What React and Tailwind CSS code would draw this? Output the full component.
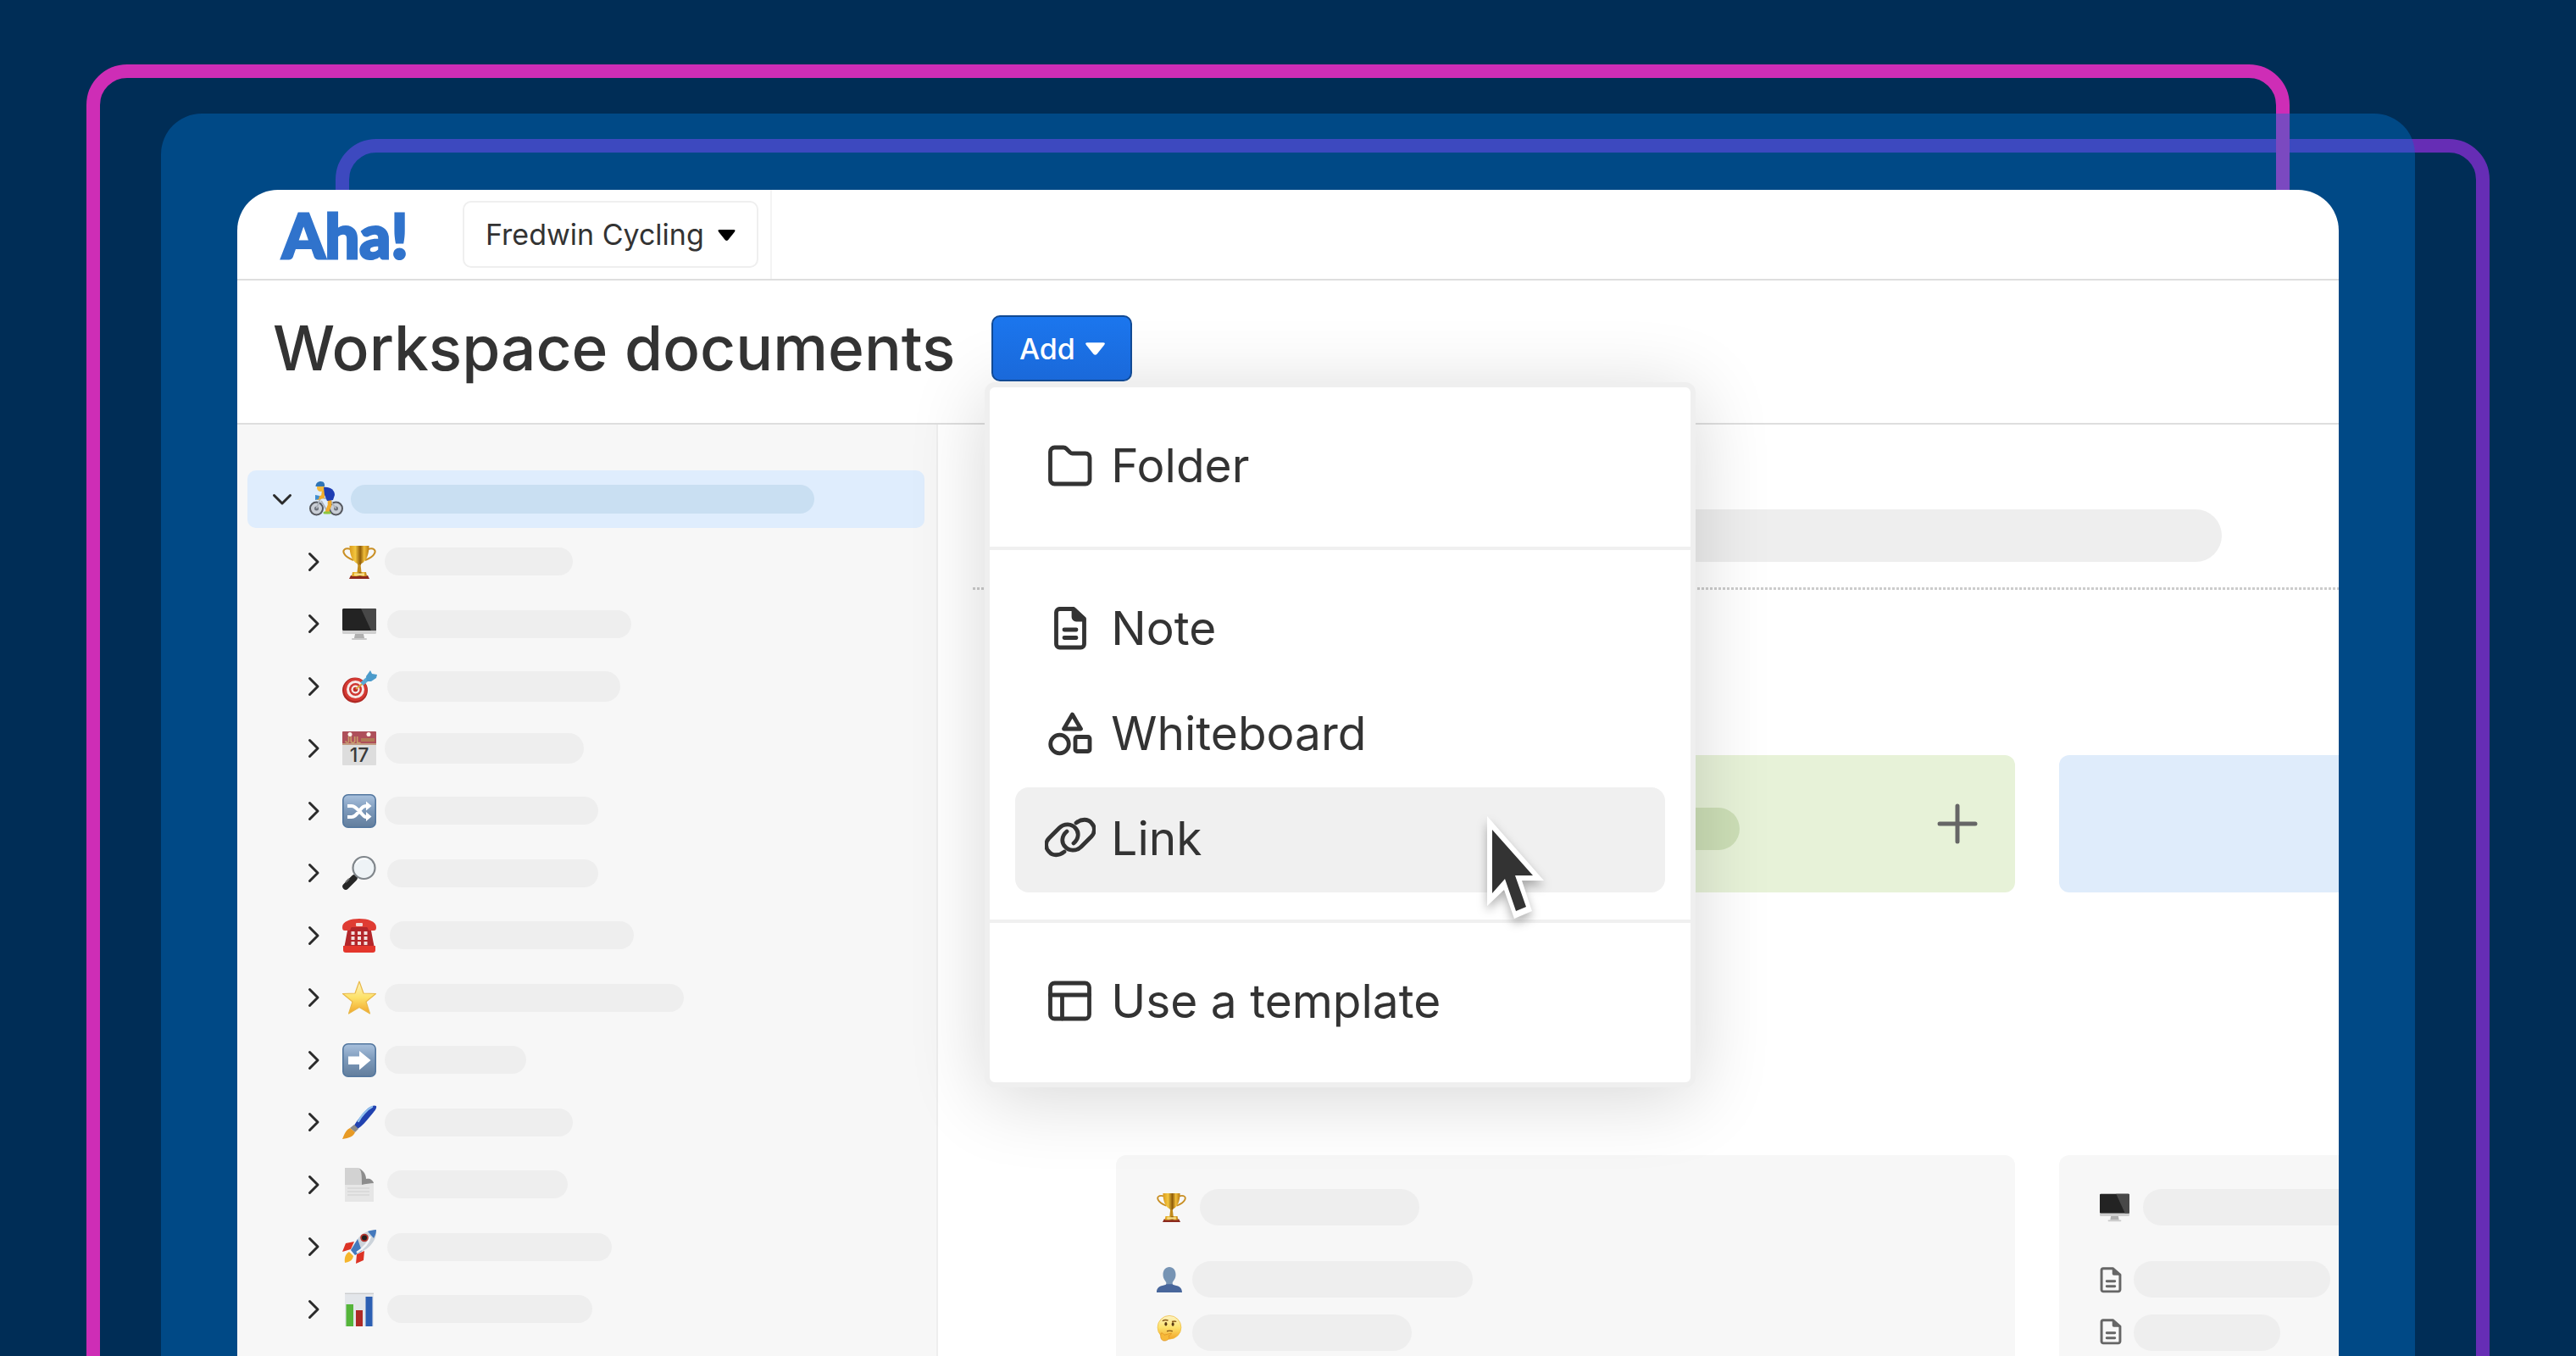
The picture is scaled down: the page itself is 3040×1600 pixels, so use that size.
import { useState } from "react";

//Sidebar tree
const treeItems = [
  { id: 1, name: "Goals", icon: "trophy", bar: "ml-[10px] w-[222px] h-[33px]" },
  { id: 2, name: "Product", icon: "monitor", bar: "ml-[13px] w-[288px] h-[33px]" },
  { id: 3, name: "Strategy", icon: "target", bar: "ml-[13px] w-[275px] h-[36px]" },
  { id: 4, name: "Planning", icon: "calendar", bar: "ml-[10px] w-[235px] h-[36px]" },
  { id: 5, name: "Workflows", icon: "shuffle", bar: "ml-[10px] w-[252px] h-[33px]" },
  { id: 6, name: "Research", icon: "search", bar: "ml-[13px] w-[249px] h-[33px]" },
  { id: 7, name: "Support", icon: "phone", bar: "ml-[16px] w-[288px] h-[33px]" },
  { id: 8, name: "Favorites", icon: "star", bar: "ml-[10px] w-[353px] h-[33px]" },
  { id: 9, name: "Next", icon: "arrow", bar: "ml-[10px] w-[167px] h-[33px]" },
  { id: 10, name: "Design", icon: "brush", bar: "ml-[10px] w-[222px] h-[33px]" },
  { id: 11, name: "Pages", icon: "page", bar: "ml-[13px] w-[213px] h-[33px]" },
  { id: 12, name: "Launches", icon: "rocket", bar: "ml-[13px] w-[265px] h-[33px]" },
  { id: 13, name: "Reports", icon: "chart", bar: "ml-[13px] w-[242px] h-[33px]" },
];

//Add menu, one array per section
const menuSections = [
  [{ label: "Folder", icon: "folder" }],
  [
    { label: "Note", icon: "note" },
    { label: "Whiteboard", icon: "whiteboard" },
    { label: "Link", icon: "link" },
  ],
  [{ label: "Use a template", icon: "template" }],
];

const App = () => {
  const [active, setActive] = useState("Link");

  return (
    <div className="relative flex h-screen flex-col overflow-hidden bg-[#002d56] px-[190px] pt-[134px] font-['Inter',sans-serif] text-[#333333]">
      {/* BACKDROP FRAMES */}
      <div className="absolute top-[164px] right-[102px] -bottom-20 left-[396px] rounded-[48px] border-[16px] border-[#662db5]" />
      <div className="absolute top-[76px] right-[338px] -bottom-20 left-[102px] rounded-[48px] border-[16px] border-[#ce2db6]" />

      <div className="relative flex flex-1 flex-col rounded-t-[48px] bg-[#0073cf]/40 px-[90px] pt-[90px]">
        <div className="flex flex-1 flex-col overflow-hidden rounded-t-[48px] bg-white">
          <TopBar />

          {/* TITLE */}
          <div className="flex h-[170px] shrink-0 items-center border-b-2 border-[#dedede] pb-2 pl-[42px]">
            <h1 className="text-[73px] leading-[90px] font-medium whitespace-nowrap">
              Workspace documents
            </h1>
            <div className="relative z-10 ml-[43px]">
              <button className="relative z-10 flex h-[78px] w-[166px] items-center justify-center gap-3 rounded-[10px] border-2 border-[#124a94] bg-linear-to-b from-[#1b76ee] to-[#1a69da] text-[34px] font-medium text-white">
                Add
                <Caret className="h-[15px] w-[23px]" />
              </button>
              <AddMenu active={active} setActive={setActive} />
            </div>
          </div>

          <div className="flex min-h-0 flex-1">
            <Sidebar />
            <Main />
          </div>
        </div>
      </div>
    </div>
  );
};

const TopBar = () => (
  <header className="flex h-[107px] shrink-0 items-center border-b-2 border-[#dedede] pl-[53px]">
    <a
      href="#"
      className="w-[213px] font-['Lato',sans-serif] text-[72px] leading-[80px] font-black text-[#3073cc] [-webkit-text-stroke:3px_#3073cc]"
    >
      Aha!
    </a>
    <div className="relative">
      <select
        aria-label="Workspace"
        className="h-[79px] w-[349px] appearance-none rounded-[10px] border-2 border-[#efefef] bg-white pl-[25px] text-[34px]"
      >
        <option>Fredwin Cycling</option>
      </select>
      <Caret className="pointer-events-none absolute top-[34px] right-[27px] h-[13px] w-[21px] text-black" />
    </div>
    <div className="ml-[14px] h-full w-[2px] bg-[#f4f4f4]" />
  </header>
);

const AddMenu = ({ active, setActive }) => (
  <div className="absolute top-[79px] -left-[8px] w-[839px] divide-y-4 divide-[#f0f0f0] rounded-[12px] border-[6px] border-[#efefef] bg-white shadow-[0_12px_90px_rgba(0,0,0,0.16)]">
    {menuSections.map((section) => (
      <div key={section[0].label} className="px-[30px] py-8">
        {section.map((item) => (
          <button
            key={item.label}
            onClick={() => setActive(item.label)}
            className={
              item.label === active
                ? "relative flex h-[124px] w-full items-center gap-[18px] rounded-[16px] bg-[#f0f0f0] pb-1 pl-[35px] text-[55px]"
                : "relative flex h-[124px] w-full items-center gap-[18px] rounded-[16px] pb-1 pl-[35px] text-[55px]"
            }
          >
            <MenuIcon name={item.icon} />
            {item.label}
            {item.label === active && <Cursor />}
          </button>
        ))}
      </div>
    ))}
  </div>
);

const Sidebar = () => (
  <aside className="w-[827px] shrink-0 border-r-2 border-[#eeeeee] bg-[#f7f7f7] pt-[54px] pr-[14px] pl-[12px]">
    <div className="flex h-[68px] items-center rounded-[10px] bg-[#dfedfd] pl-[29px]">
      <button aria-label="Collapse workspace">
        <Chevron className="h-6 w-6 rotate-90" />
      </button>
      <Emoji name="cyclist" className="ml-5 h-[40px] w-[40px]" />
      <div className="ml-[9px] h-[34px] w-[547px] rounded-full bg-[#c9dff2]" />
    </div>
    <ul className="mt-[3px] flex h-[955px] flex-col justify-between">
      {treeItems.map((item) => (
        <li key={item.id} className="flex h-[73px] items-center pl-[66px]">
          <button aria-label={`Expand ${item.name}`}>
            <Chevron className="h-6 w-6" />
          </button>
          <Emoji name={item.icon} className="ml-[22px] h-[40px] w-[40px]" />
          <div className={`rounded-full bg-[#eeeeee] ${item.bar}`} />
        </li>
      ))}
    </ul>
  </aside>
);

const Main = () => (
  <main className="min-w-0 flex-1 overflow-hidden pt-[100px] pl-[41px]">
    <div className="ml-[169px] h-[62px] w-[1305px] rounded-full bg-[#eeeeee]" />
    <div className="mt-[30px] h-[3px] bg-[repeating-linear-gradient(90deg,#cccccc_0_3px,transparent_3px_5px)]" />

    {/* CARDS */}
    <div className="mt-[195px] ml-[169px] grid grid-cols-[1061px_1061px] gap-x-[52px]">
      <div className="flex h-[162px] items-center justify-between rounded-[12px] bg-[#e7f2d8] pr-[44px] pl-12">
        <div className="mt-3 h-[50px] w-[688px] rounded-full bg-[#cddfb7]" />
        <button aria-label="Add document">
          <svg viewBox="0 0 48 48" className="h-12 w-12" fill="none">
            <path
              d="M24 3v42M3 24h42"
              stroke="#666666"
              strokeWidth="5"
              strokeLinecap="round"
            />
          </svg>
        </button>
      </div>
      <div className="h-[162px] rounded-[12px] bg-[#dfecfb]" />

      <div className="mt-[310px] h-[400px] rounded-[12px] bg-[#f7f7f7] pt-[40px] pl-12">
        <div className="flex items-center gap-4">
          <Emoji name="trophy" className="h-[35px] w-[35px]" />
          <div className="h-[43px] w-[259px] rounded-full bg-[#eeeeee]" />
        </div>
        <div className="mt-[42px] flex items-center gap-3">
          <Emoji name="person" className="h-[30px] w-[30px]" />
          <div className="h-[43px] w-[331px] rounded-full bg-[#eeeeee]" />
        </div>
        <div className="mt-5 flex items-center gap-3">
          <Emoji name="thinking" className="mb-3 h-[30px] w-[30px]" />
          <div className="h-[43px] w-[259px] rounded-full bg-[#eeeeee]" />
        </div>
      </div>
      <div className="mt-[310px] h-[400px] rounded-[12px] bg-[#f7f7f7] pt-[40px] pl-12">
        <div className="flex items-center gap-4">
          <Emoji name="monitor" className="h-[35px] w-[35px]" />
          <div className="h-[43px] w-[400px] rounded-full bg-[#eeeeee]" />
        </div>
        <div className="mt-[42px] flex items-center gap-[14px]">
          <DocIcon className="h-[32px] w-[26px] text-[#666666]" />
          <div className="h-[43px] w-[232px] rounded-full bg-[#eeeeee]" />
        </div>
        <div className="mt-5 flex items-center gap-[14px]">
          <DocIcon className="mb-1 h-[32px] w-[26px] text-[#666666]" />
          <div className="h-[43px] w-[173px] rounded-full bg-[#eeeeee]" />
        </div>
      </div>
    </div>
  </main>
);

const Caret = ({ className }) => (
  <svg viewBox="0 0 22 14" className={className} fill="currentColor">
    <path d="M2 0h18q3 0 1 3l-8 10q-2 2-4 0l-8-10q-2-3 1-3z" />
  </svg>
);

const Chevron = ({ className }) => (
  <svg viewBox="0 0 24 24" className={className} fill="none">
    <path
      d="M7.500 2.500l9.500 9.500-9.500 9.500"
      stroke="#2b2b2b"
      strokeWidth="3"
      strokeLinecap="round"
      strokeLinejoin="round"
    />
  </svg>
);

const Cursor = () => (
  <svg
    viewBox="0 0 68 121"
    className="absolute top-[34px] left-[557px] h-[121px] w-[68px] overflow-visible drop-shadow-[0_6px_6px_rgba(0,0,0,0.3)]"
  >
    <path d="M0 0l67 76H41l12 36-21 9-12-34L0 106z" fill="#ffffff" />
    <path d="M6 16l48 54H33l13 37-12 5-13-38L6 91z" fill="#333333" />
  </svg>
);

const DocIcon = ({ className }) => (
  <svg viewBox="8 3 44 54" className={className} fill="none">
    <path
      d="M17 7.500h17L48.500 20v30a3.500 3.500 0 0 1-3.500 3.500H15a3.500 3.500 0 0 1-3.500-3.500V11a3.500 3.500 0 0 1 3.500-3.500z"
      stroke="currentColor"
      strokeWidth="5"
      strokeLinejoin="round"
    />
    <path d="M33 7v11a3 3 0 0 0 3 3h13z" fill="currentColor" />
    <path
      d="M22 33h16M22 43h16"
      stroke="currentColor"
      strokeWidth="5"
      strokeLinecap="round"
    />
  </svg>
);

const MenuIcon = ({ name }) => (
  <svg
    viewBox="0 0 60 60"
    className="h-[60px] w-[60px]"
    fill="none"
    stroke="#333333"
    strokeWidth="4.800"
    strokeLinejoin="round"
    strokeLinecap="round"
  >
    {name === "folder" && (
      <path d="M6.500 14a5 5 0 0 1 5-5H22a5 5 0 0 1 3.500 1.500l4.500 4.500a4 4 0 0 0 3 1h15a5 5 0 0 1 5 5v26a5 5 0 0 1-5 5H11.500a5 5 0 0 1-5-5z" />
    )}
    {name === "note" && (
      <>
        <path d="M17 7.500h17L46.500 19v30a4 4 0 0 1-4 4h-25a4 4 0 0 1-4-4V11.500a4 4 0 0 1 4-4z" />
        <path d="M34 8v9a3 3 0 0 0 3 3h9z" fill="#333333" />
        <path d="M23 32h14M23 41.500h14" />
      </>
    )}
    {name === "whiteboard" && (
      <>
        <path d="M32.500 8L42.500 25h-20z" />
        <circle cx="17.500" cy="43" r="10.800" />
        <rect x="36" y="34.500" width="17" height="17" rx="2" />
      </>
    )}
    {name === "link" && (
      <>
        <path d="M23 46C17 51 9 51 5 46C0 41 1 34 5 30L17 18C23 12 32 13 36 18C41 23 40 31 34 36" />
        <path d="M37 12C43 7 51 7 55 12C60 17 59 24 55 28L43 40C37 46 28 45 24 40C19 35 20 27 26 22" />
      </>
    )}
    {name === "template" && (
      <>
        <rect x="6.500" y="9" width="46" height="42" rx="5" />
        <path d="M6.500 23h46M20.500 23v28" />
      </>
    )}
  </svg>
);

//Full colour row icons
const Emoji = ({ name, className }) => (
  <svg viewBox="0 0 40 40" className={`overflow-visible ${className}`} fill="none">
    <defs>
      <linearGradient id={`gold-${name}`} x1="0" x2="1" y1="0" y2="0">
        <stop offset="0" stopColor="#d99a1c" />
        <stop offset="0.300" stopColor="#f3c63f" />
        <stop offset="0.550" stopColor="#8f5c0a" />
        <stop offset="0.750" stopColor="#f0bd3a" />
        <stop offset="1" stopColor="#b67a12" />
      </linearGradient>
      <linearGradient id={`steel-${name}`} x1="0" x2="0" y1="0" y2="1">
        <stop offset="0" stopColor="#a9c1dd" />
        <stop offset="0.500" stopColor="#7b98b9" />
        <stop offset="1" stopColor="#627d9c" />
      </linearGradient>
      <linearGradient id={`sun-${name}`} x1="0" x2="0" y1="0" y2="1">
        <stop offset="0" stopColor="#fdf3c4" />
        <stop offset="0.500" stopColor="#fde26a" />
        <stop offset="1" stopColor="#f2a52a" />
      </linearGradient>
    </defs>

    {name === "cyclist" && (
      <>
        <g stroke="#55585f" strokeWidth="2">
          <circle cx="8.500" cy="31" r="7.500" fill="#c9ced6" />
          <circle cx="31.500" cy="31" r="7.500" fill="#c9ced6" />
        </g>
        <circle cx="8.500" cy="31" r="2.500" fill="#6d727b" />
        <circle cx="31.500" cy="31" r="2.500" fill="#6d727b" />
        <path d="M8.500 31l5-13 10 2 8 11M14 22l7 12" stroke="#aeb4bd" strokeWidth="2" />
        <path d="M24 18l0 9-3 8" stroke="#f0ab2c" strokeWidth="4.500" strokeLinecap="round" />
        <path d="M18 36h6" stroke="#8cc63f" strokeWidth="3" strokeLinecap="round" />
        <path d="M17 9l-1 8-6 2" stroke="#f0ab2c" strokeWidth="4" strokeLinecap="round" />
        <circle cx="13.500" cy="6.500" r="4.500" fill="#f5b93a" />
        <path d="M7.500 5c0-4 3-6 6-6 4 0 5 3 4.500 6z" fill="#2f74b5" />
        <path d="M17 6c7-1 13 3 13 9l-2 6-7 1-3-7z" fill="#1e3db3" />
        <path d="M7 15l5 1-1 4-4 1z" fill="#3f8ed0" />
      </>
    )}
    {name === "trophy" && (
      <>
        <path
          d="M10 5C3 3 0 6 2 10s6 6 11 8M30 5c7-2 10 1 8 5s-6 6-11 8"
          stroke="#c98f24"
          strokeWidth="2"
        />
        <path d="M8.500 1h23c0 10-3 18-9 21l-1 2h-3l-1-2c-6-3-9-11-9-21z" fill={`url(#gold-${name})`} />
        <path d="M18.500 23h3l1 9h-5z" fill="#c28b1c" />
        <path d="M10 36h20l2 4H8z" fill="#8c2a1e" />
        <path d="M12 32h16l1 5H11z" fill={`url(#gold-${name})`} />
        <rect x="14" y="33.500" width="12" height="2.500" fill="#f7dd8b" />
      </>
    )}
    {name === "monitor" && (
      <>
        <rect x="0" y="2" width="40" height="30" rx="1.500" fill="#cfcfcf" />
        <rect x="0" y="2" width="40" height="26" rx="1.500" fill="#232323" />
        <path d="M22 2h16.500A1.500 1.500 0 0 1 40 3.500V28h-6z" fill="#484848" />
        <path d="M15 32h10l1 5H14z" fill="#b0b0b0" />
        <rect x="11" y="37" width="18" height="2" rx="1" fill="#c9c9c9" />
      </>
    )}
    {name === "target" && (
      <>
        <circle cx="15" cy="24.500" r="15" fill="#b02a25" />
        <circle cx="15.500" cy="23.500" r="13.500" fill="#d63a33" />
        <circle cx="15.500" cy="23.500" r="10.500" fill="#f6e9e7" />
        <circle cx="15.500" cy="23.500" r="7.500" fill="#cf3630" />
        <circle cx="15.500" cy="23.500" r="5" fill="#f6e9e7" />
        <circle cx="15.500" cy="23.500" r="2.800" fill="#c22f2a" />
        <path d="M16 23l10-8" stroke="#d9a441" strokeWidth="2" />
        <path d="M23 17l9-8" stroke="#58a9d6" strokeWidth="5" />
        <path d="M28 8l5-7 2 4 6 1-1 4-6 4-5 0z" fill="#4b9bcb" />
      </>
    )}
    {name === "calendar" && (
      <>
        <rect width="40" height="40" rx="1" fill="#dddddd" />
        <rect width="40" height="15" rx="1" fill="#ae4f5a" />
        <rect y="14" width="40" height="2" fill="#c39a80" />
        <text x="3" y="14" fontSize="10" fontWeight="700" fill="#c9a06b">
          JUL
        </text>
        <rect x="22" y="8" width="16" height="4" fill="#b07a55" />
        <circle cx="9" cy="3.500" r="2.500" fill="#fff6ee" />
        <circle cx="31" cy="3.500" r="2.500" fill="#fff6ee" />
        <text x="20" y="36" textAnchor="middle" fontSize="23" fontWeight="500" fill="#3a3a3a">
          17
        </text>
      </>
    )}
    {(name === "shuffle" || name === "arrow") && (
      <rect
        x="0.800"
        y="0.800"
        width="38.400"
        height="38.400"
        rx="6"
        fill={`url(#steel-${name})`}
        stroke="#53779f"
        strokeWidth="1.600"
      />
    )}
    {name === "shuffle" && (
      <>
        <path
          d="M6 14h5c3 0 5 2 9 6s5 7 8 7h1M6 27h5c3 0 5-2 9-7s5-6 8-6h1"
          stroke="#ffffff"
          strokeWidth="4"
        />
        <path d="M28 8.500l6.500 5.500-6.500 5.500zM28 21l6.500 5.500L28 32z" fill="#ffffff" />
      </>
    )}
    {name === "arrow" && <path d="M7 15.500h13V9l13.500 11L20 31.500V25H7z" fill="#ffffff" />}
    {name === "search" && (
      <>
        <path d="M17 24l-3 3" stroke="#8d8d8d" strokeWidth="3" />
        <path d="M14 26L4 36" stroke="#262626" strokeWidth="7.500" strokeLinecap="round" />
        <path d="M8 27l-4 4" stroke="#6a6a6a" strokeWidth="2" />
        <circle cx="25.500" cy="14" r="13" fill="#eef3f6" stroke="#80868b" strokeWidth="2.200" />
        <path d="M16 9c3-5 9-7 14-5" stroke="#ffffff" strokeWidth="1.500" />
      </>
    )}
    {name === "phone" && (
      <>
        <path d="M7 9h26l5 26H2z" fill="#b3262a" />
        <path d="M0 10C0 3 10 0 20 0s20 3 20 10c0 3-1 4-3 4h-4c-2 0-3-1-3-3l-1-1H11l-1 1c0 2-1 3-3 3H3c-2 0-3-1-3-4z" fill="#df3c33" />
        <path d="M1 32h38v5a3 3 0 0 1-3 3H4a3 3 0 0 1-3-3z" fill="#e4362c" />
        <rect x="16" y="5" width="8" height="4" rx="1" fill="#f6d9d6" />
        <g fill="#f3dedc">
          <rect x="10.500" y="15" width="4" height="4" />
          <rect x="18" y="15" width="4" height="4" />
          <rect x="25.500" y="15" width="4" height="4" />
          <rect x="10.500" y="21" width="4" height="4" />
          <rect x="18" y="21" width="4" height="4" />
          <rect x="25.500" y="21" width="4" height="4" />
          <rect x="10.500" y="27" width="4" height="4" />
          <rect x="18" y="27" width="4" height="4" />
          <rect x="25.500" y="27" width="4" height="4" />
        </g>
      </>
    )}
    {name === "star" && (
      <path
        d="M20 1l5 14 14.500.500-11.500 9.500L32.500 39 20 31.500 7.500 39l4.500-14-11.500-9.500L15 15z"
        fill={`url(#sun-${name})`}
        stroke="#e9b949"
        strokeWidth="1.200"
        strokeLinejoin="round"
      />
    )}
    {name === "brush" && (
      <>
        <path d="M40 1c-3-2-9 1-14 7S16 20 14 24l4 4c5-3 10-9 15-15s8-9 7-12z" fill="#2142b0" />
        <path d="M35 2c-6 3-13 11-16 17" stroke="#93c2ee" strokeWidth="2.500" strokeLinecap="round" />
        <path d="M14 23l5 5-4 4-6-5z" fill="#8b8b8b" />
        <path d="M9 27l6 5c-2 5-7 7-15 8 2-4 3-10 9-13z" fill="#e79a25" />
      </>
    )}
    {name === "page" && (
      <>
        <path d="M3 0h15c4 0 6 4 6 9v4l13 5v22H3z" fill="#e6e6e6" />
        <path d="M3 0h15c4 0 5 4 5 9v11H3z" fill="#d2d2d2" />
        <path d="M18 0c5 1 5 9 5 20 4-1 10-2 14-2-1-4-5-6-9-5 0-6-4-11-10-13z" fill="#8d8d8d" />
        <path d="M6 24h26M6 28h26M6 32h26" stroke="#d6d6d6" strokeWidth="1.500" />
      </>
    )}
    {name === "rocket" && (
      <>
        <path d="M14 14L4 16 0 26l10-3zM26 25l-1 11-9 4 1-11z" fill="#dc3325" />
        <path d="M8 26c-4 2-6 7-5 13 6-1 9-3 10-8z" fill="#f5b52c" />
        <path d="M40 0c-9 0-17 4-22 11L10 24l5 6 13-7C36 17 41 9 40 0z" fill="#ccd3da" />
        <path d="M40 0c-3 0-7 1-10 2l7 8c2-3 3-7 3-10zM18 11l-8 13 5 6 8-5z" fill="#4479bd" />
        <path d="M33 8c-2 8-8 14-16 19" stroke="#f4f6f8" strokeWidth="2.500" />
        <circle cx="26" cy="9.500" r="4.800" fill="#b5332b" />
        <circle cx="26" cy="9.500" r="3" fill="#202020" />
      </>
    )}
    {name === "chart" && (
      <>
        <rect x="3" y="0" width="34" height="40" fill="#e3e6ea" />
        <path d="M3 1.500h34" stroke="#cdcdcd" />
        <rect x="4.500" y="14" width="8.500" height="26" fill="#55b53a" />
        <rect x="16" y="21" width="8" height="19" fill="#ae2a26" />
        <rect x="27.500" y="5" width="8" height="35" fill="#2c5fb3" />
      </>
    )}
    {name === "person" && (
      <>
        <path d="M20 0c6 0 10 5 10 12 0 6-3 9-5 12v4H15v-4c-2-3-5-6-5-12C10 5 14 0 20 0z" fill="#7794b4" />
        <path d="M15 27h10c3 3 15 1 15 13H0c0-12 12-10 15-13z" fill="#48669b" />
      </>
    )}
    {name === "thinking" && (
      <>
        <circle cx="20" cy="19" r="18.500" fill={`url(#sun-${name})`} stroke="#eebb3e" />
        <path d="M9 9c3-2 6-2 9-1M24 10c3-1 5-1 7 0" stroke="#8a5a18" strokeWidth="1.800" />
        <ellipse cx="14.500" cy="13.500" rx="2" ry="3" fill="#5a3a14" />
        <ellipse cx="25.500" cy="14" rx="2" ry="3" fill="#5a3a14" />
        <path d="M16 25c3-1 6-1 9 0" stroke="#8a5a18" strokeWidth="1.800" />
        <path d="M7 28c2-1 3 1 5 3l11-3c1 2-2 3-4 4 2 5-2 8-7 8s-7-6-5-12z" fill="#f7b938" stroke="#dd9324" />
      </>
    )}
  </svg>
);

export default App;
